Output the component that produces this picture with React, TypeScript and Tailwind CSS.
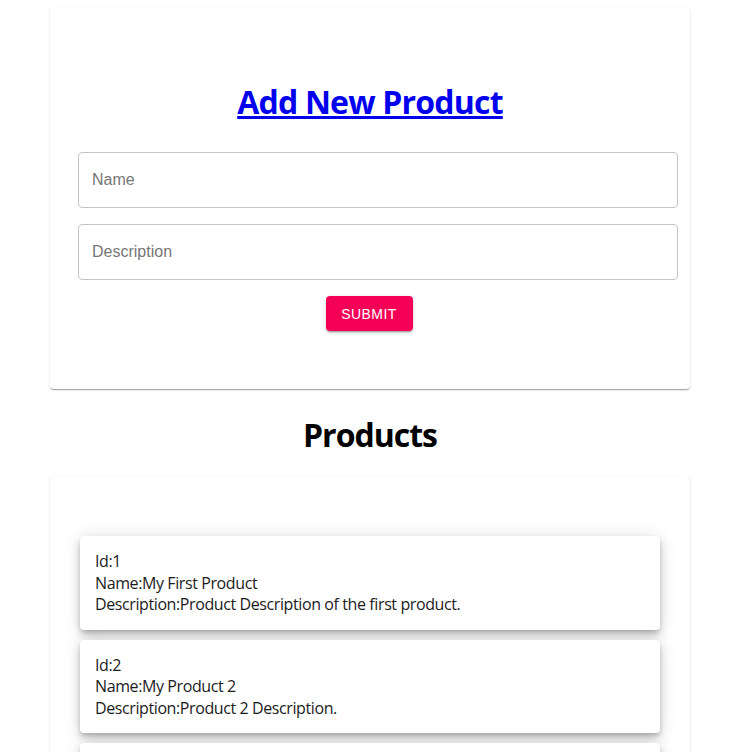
const products = [
  { id: 1, name: 'My First Product', description: 'Product Description of the first product.' },
  { id: 2, name: 'My Product 2', description: 'Product 2 Description.' },
  { id: 3, name: 'My Product 3', description: 'Product 3 Description.' },
]

const paperShadow =
  'shadow-[0px_2px_1px_-1px_rgba(0,0,0,0.2),0px_1px_1px_0px_rgba(0,0,0,0.14),0px_1px_3px_0px_rgba(0,0,0,0.12)]'

export default function App() {
  return (
    <div className="min-h-screen bg-white font-['Open_Sans',sans-serif] text-black">
      <div className="ml-[50px] w-[640px] pt-2">
        {/* Add product form */}
        <div className={`rounded bg-white pt-[72px] pb-[58px] ${paperShadow}`}>
          <h1 className="text-center text-[32px] leading-[43px] font-bold tracking-[-0.8px]">
            <a href="#" className="text-[#0000ee] underline">
              Add New Product
            </a>
          </h1>
          <form className="mt-[29px] flex flex-col items-center font-['Liberation_Sans',Arial,sans-serif]">
            <input
              placeholder="Name"
              className="ml-[28px] h-[56px] w-[600px] self-start rounded border border-[#c4c4c4] px-[13px] text-base text-[#333] outline-none placeholder:text-[#767676]"
            />
            <input
              placeholder="Description"
              className="mt-4 ml-[28px] h-[56px] w-[600px] self-start rounded border border-[#c4c4c4] px-[13px] text-base text-[#333] outline-none placeholder:text-[#767676]"
            />
            <button
              type="button"
              className="mt-4 mr-[2px] h-[35px] w-[87px] rounded bg-[#f50057] text-sm tracking-[0.4px] text-white uppercase shadow-[0px_3px_1px_-2px_rgba(0,0,0,0.2),0px_2px_2px_0px_rgba(0,0,0,0.14),0px_1px_5px_0px_rgba(0,0,0,0.12)]"
            >
              Submit
            </button>
          </form>
        </div>

        <h1 className="mt-[24px] text-center text-[32px] leading-[43px] font-bold tracking-[-1px]">
          Products
        </h1>

        {/* Product list */}
        <div className={`mt-[20px] rounded bg-white px-[30px] pt-[60px] pb-8 ${paperShadow}`}>
          <div className="flex flex-col gap-[10px]">
            {products.map((p) => (
              <div
                key={p.id}
                className="rounded bg-white px-[15px] pt-[15px] pb-[14px] text-base leading-[21.5px] tracking-[-0.4px] text-[#1c1c1c] shadow-[0px_3px_5px_-1px_rgba(0,0,0,0.2),0px_6px_10px_0px_rgba(0,0,0,0.14),0px_1px_18px_0px_rgba(0,0,0,0.12)]"
              >
                <div>Id:{p.id}</div>
                <div>Name:{p.name}</div>
                <div>Description:{p.description}</div>
              </div>
            ))}
          </div>
        </div>
      </div>
    </div>
  )
}
